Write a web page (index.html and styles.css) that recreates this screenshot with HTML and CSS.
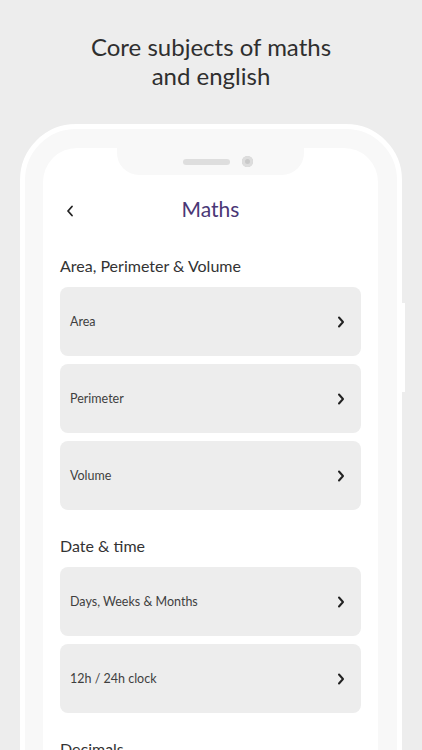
FILE: index.html
```html
<!DOCTYPE html>
<html lang="en">
<head>
  <meta charset="UTF-8" />
  <meta name="viewport" content="width=device-width, initial-scale=1.0"/>
  <title>Maths</title>
  <link rel="stylesheet" href="styles.css">
</head>
<body>

<h1 class="headline">Core subjects of maths<br>and english</h1>

<div class="phone">
  <div class="side-button"></div>
  <div class="screen">
    <div class="notch">
      <span class="speaker"></span>
      <span class="camera"></span>
    </div>

    <!-- Header -->
    <div class="topbar">
      <svg class="back" width="8" height="12" viewBox="0 0 8 12">
        <path d="M6 1.5 L2 6 L6 10.5" fill="none" stroke="#222" stroke-width="1.8" stroke-linecap="round" stroke-linejoin="round"/>
      </svg>
      <h2>Maths</h2>
    </div>

    <!-- Area, Perimeter & Volume -->
    <h3 class="section">Area, Perimeter &amp; Volume</h3>
    <div class="item"><span>Area</span>
      <svg width="8" height="12" viewBox="0 0 8 12"><path d="M2 1.5 L6 6 L2 10.5" fill="none" stroke="#222" stroke-width="2" stroke-linecap="round" stroke-linejoin="round"/></svg>
    </div>
    <div class="item"><span>Perimeter</span>
      <svg width="8" height="12" viewBox="0 0 8 12"><path d="M2 1.5 L6 6 L2 10.5" fill="none" stroke="#222" stroke-width="2" stroke-linecap="round" stroke-linejoin="round"/></svg>
    </div>
    <div class="item"><span>Volume</span>
      <svg width="8" height="12" viewBox="0 0 8 12"><path d="M2 1.5 L6 6 L2 10.5" fill="none" stroke="#222" stroke-width="2" stroke-linecap="round" stroke-linejoin="round"/></svg>
    </div>

    <!-- Date & time -->
    <h3 class="section">Date &amp; time</h3>
    <div class="item"><span>Days, Weeks &amp; Months</span>
      <svg width="8" height="12" viewBox="0 0 8 12"><path d="M2 1.5 L6 6 L2 10.5" fill="none" stroke="#222" stroke-width="2" stroke-linecap="round" stroke-linejoin="round"/></svg>
    </div>
    <div class="item"><span>12h / 24h clock</span>
      <svg width="8" height="12" viewBox="0 0 8 12"><path d="M2 1.5 L6 6 L2 10.5" fill="none" stroke="#222" stroke-width="2" stroke-linecap="round" stroke-linejoin="round"/></svg>
    </div>

    <!-- Decimals -->
    <h3 class="section">Decimals</h3>
  </div>
</div>

</body>
</html>
```

FILE: styles.css
```css
html, body {
  height: 100%;
  overflow: hidden;
}
body {
  margin: 0;
  padding-top: 32px;
  background: #ededed;
  font-family: Lato, "Noto Sans", sans-serif;
  color: #333;
}
.headline {
  margin: 0;
  text-align: center;
  font-size: 24px;
  line-height: 29px;
  font-weight: 400;
  color: #2f2f2f;
}
.phone {
  position: relative;
  margin: 34px 0 0 20px;
  width: 382px;
  height: 700px;
  box-sizing: border-box;
  padding: 19px 19px 0 18px;
  background: #f8f8f8;
  border: 5px solid #fff;
  border-radius: 56px;
}
.side-button {
  position: absolute;
  right: -8px;
  top: 174px;
  width: 3px;
  height: 89px;
  background: #fff;
}
.screen {
  position: relative;
  background: #fff;
  border-radius: 34px 34px 0 0;
  height: 700px;
  padding: 0 17px;
}
.notch {
  position: absolute;
  left: 74px;
  top: 0;
  width: 187px;
  height: 27px;
  background: #f8f8f8;
  border-radius: 0 0 22px 22px;
  display: flex;
  justify-content: center;
  align-items: center;
  gap: 12px;
  padding-left: 14px;
  box-sizing: border-box;
}
.speaker {
  width: 47px;
  height: 6px;
  border-radius: 3px;
  background: #dedede;
}
.camera {
  width: 11px;
  height: 11px;
  border-radius: 50%;
  background: #c9c9c9;
  box-shadow: inset 0 0 0 3px #dddddd;
}
.topbar {
  position: relative;
  padding-top: 48px;
  height: 26px;
  text-align: center;
}
.topbar h2 {
  margin: 0;
  font-size: 21px;
  line-height: 26px;
  font-weight: 400;
  color: #4a3776;
}
.back {
  position: absolute;
  left: 6px;
  top: 57px;
}
.section {
  margin: 34px 0 11px;
  font-size: 16px;
  line-height: 20px;
  font-weight: 400;
  color: #333;
}
.item {
  height: 69px;
  margin-bottom: 8px;
  padding: 0 16px 0 10px;
  background: #ededed;
  border-radius: 8px;
  display: flex;
  align-items: center;
  justify-content: space-between;
  font-size: 12.5px;
  color: #3f3f3f;
}
.item + .section {
  margin-top: 26px;
}
```
